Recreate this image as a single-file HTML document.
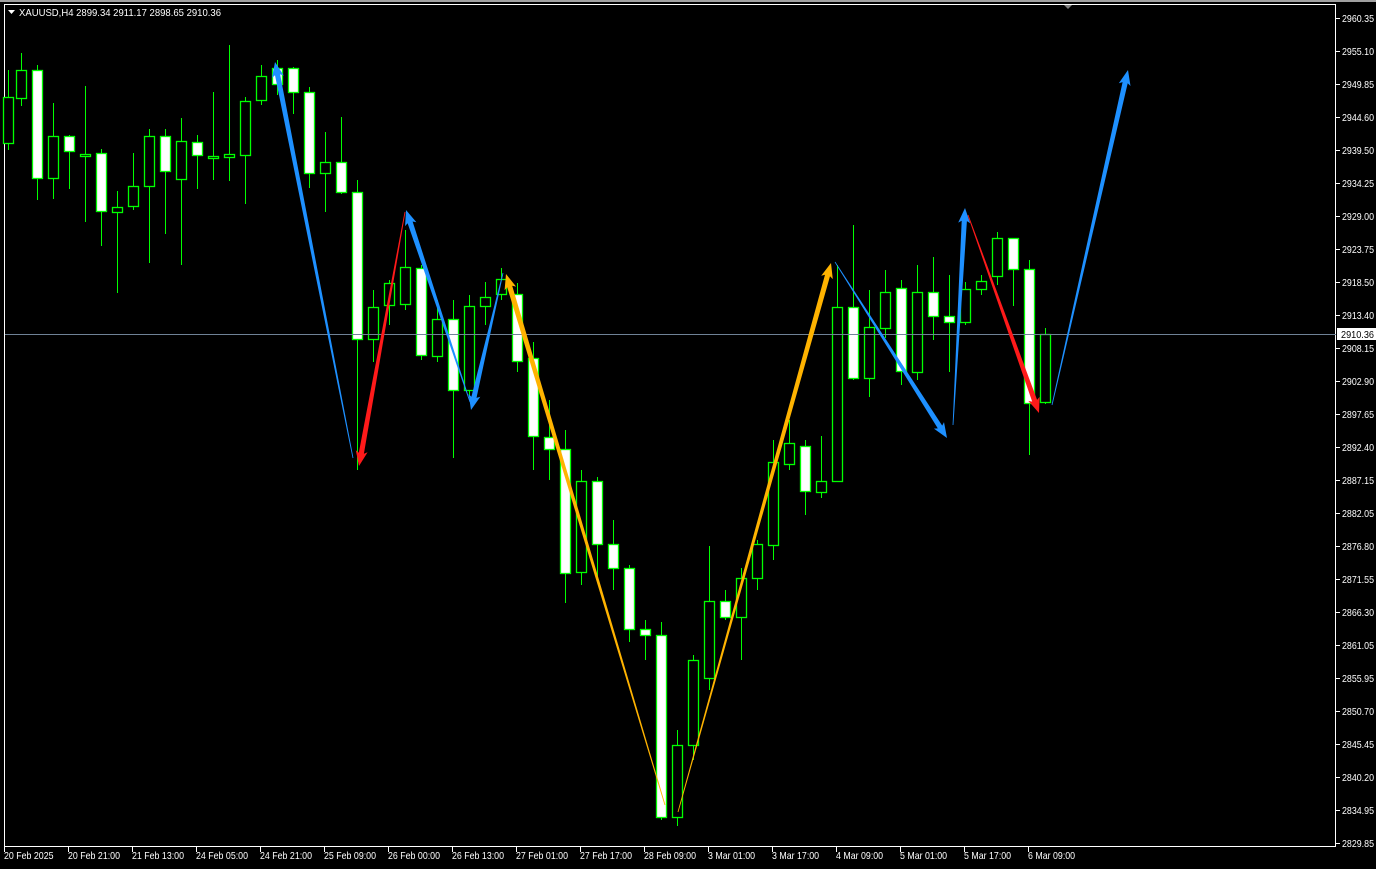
<!DOCTYPE html>
<html><head><meta charset="utf-8"><style>
html,body{margin:0;padding:0;background:#000;width:1376px;height:869px;overflow:hidden}
svg{display:block}
text{font-family:"Liberation Sans",sans-serif;font-size:10.5px;fill:#fff}
</style></head><body>
<svg id="s" width="1376" height="869" viewBox="0 0 1376 869" xmlns="http://www.w3.org/2000/svg">
<rect x="0" y="0" width="1376" height="869" fill="#000"/>
<rect x="0" y="0" width="1376" height="2" fill="#a0a0a0"/>
<rect x="4.5" y="4.5" width="1331" height="842" fill="none" stroke="#fff" stroke-width="1"/>
<polygon points="1064,5 1072,5 1068,9" fill="#808080"/>
<g id="cd"></g>
<line x1="5" y1="334.5" x2="1336" y2="334.5" stroke="#6f8296" stroke-width="1"/>
<g id="ar"></g>
<polygon points="8,10 15,10 11.5,14" fill="#fff"/>
<text x="19" y="16" textLength="202" lengthAdjust="spacingAndGlyphs">XAUUSD,H4  2899.34 2911.17 2898.65 2910.36</text>
<g id="ax"></g>
<rect x="1337" y="328" width="39" height="12" fill="#fff"/>
<text x="1341" y="338" style="fill:#000" textLength="33" lengthAdjust="spacingAndGlyphs">2910.36</text>
<g id="bx"></g>
</svg>
<script>
var ns="http://www.w3.org/2000/svg";
function el(t,a,p){var e=document.createElementNS(ns,t);for(var k in a)e.setAttribute(k,a[k]);p.appendChild(e);return e;}
var C=[[8,70,150,97,143,0],[21,53,106,70,98,0],[37,65,200,70,178,1],[53,103,199,136,178,0],[69,135,189,136,151,1],[85,86,222,154,154,0],[101,149,246,153,211,1],[117,191,293,207,212,0],[133,153,210,186,206,0],[149,129,263,136,186,0],[165,129,234,136,171,1],[181,118,265,141,179,0],[197,135,189,142,155,1],[213,92,180,156,156,0],[229,45,181,154,157,0],[245,97,204,101,155,0],[261,65,105,76,100,0],[277,60,95,68,84,1],[293,67,114,68,92,1],[309,87,188,92,173,1],[325,132,212,162,173,0],[341,117,194,162,192,1],[357,180,470,192,339,1],[373,290,362,307,339,0],[389,280,325,283,305,0],[405,230,310,267,304,0],[421,265,360,268,355,1],[437,300,362,319,356,0],[453,300,458,319,390,1],[469,295,396,306,390,0],[485,282,325,297,306,0],[501,268,300,279,294,0],[517,283,372,294,361,1],[533,342,470,358,436,1],[549,400,480,437,449,1],[565,430,603,449,573,1],[581,470,585,481,572,0],[597,477,582,481,544,1],[613,520,590,544,568,1],[629,565,642,568,629,1],[645,620,660,629,635,1],[661,622,820,635,817,1],[677,730,826,745,817,0],[693,655,760,660,745,0],[709,546,690,601,678,0],[725,590,620,601,617,1],[741,568,660,578,617,0],[757,540,590,544,578,0],[773,440,560,462,545,0],[789,420,470,443,464,0],[805,440,515,446,491,1],[821,436,498,481,492,0],[837,265,482,307,481,0],[853,225,380,307,378,1],[869,290,397,327,378,0],[885,270,338,292,328,0],[901,280,385,288,371,1],[917,265,380,292,372,0],[933,257,340,292,316,1],[949,275,372,316,322,1],[965,282,325,289,322,0],[981,275,295,281,289,0],[997,232,285,238,276,0],[1013,238,306,238,269,1],[1029,260,455,269,403,1],[1045,328,404,334,402,0]];
var cd=document.getElementById("cd");
C.forEach(function(c){
 el("line",{x1:c[0]+.5,y1:c[1],x2:c[0]+.5,y2:c[2],stroke:"#00ff00","stroke-width":1},cd);
 var h=Math.max(c[4]-c[3],2);
 el("rect",{x:c[0]-4.5,y:c[3]+.5,width:10,height:h,fill:c[5]?"#fff":"#000",stroke:"#00ff00","stroke-width":1.3},cd);
});
var A=[[353,458,275,62,"#1e90ff"],[405,212,359,466,"#ff1a1a"],[470,402,406,210,"#1e90ff"],[503,273,471,410,"#1e90ff"],[665,805,506,274,"#ffb300"],[678,812,831,263,"#ffb300"],[835,262,947,438,"#1e90ff"],[953,425,965,208,"#1e90ff"],[968,215,1039,413,"#ff1a1a"],[1052,405,1128,70,"#1e90ff"]];
var ar=document.getElementById("ar");
A.forEach(function(a){
 var x1=a[0],y1=a[1],x2=a[2],y2=a[3],dx=x2-x1,dy=y2-y1,L=Math.hypot(dx,dy),ux=dx/L,uy=dy/L,px=-uy,py=ux;
 var hl=13,bx=x2-ux*hl,by=y2-uy*hl,w0=0.4,w1=2.6,hw=6;
 var p=[[x1+px*w0,y1+py*w0],[bx+px*w1,by+py*w1],[bx+px*hw-ux*2,by+py*hw-uy*2],[x2,y2],[bx-px*hw-ux*2,by-py*hw-uy*2],[bx-px*w1,by-py*w1],[x1-px*w0,y1-py*w0]];
 el("polygon",{points:p.map(function(q){return q[0].toFixed(1)+","+q[1].toFixed(1)}).join(" "),fill:a[4]},ar);
});
var ax=document.getElementById("ax");
var P=["2960.35","2955.10","2949.85","2944.60","2939.50","2934.25","2929.00","2923.75","2918.50","2913.40","2908.15","2902.90","2897.65","2892.40","2887.15","2882.05","2876.80","2871.55","2866.30","2861.05","2855.95","2850.70","2845.45","2840.20","2834.95","2829.85"];
P.forEach(function(t,i){var y=18+i*33;
 el("line",{x1:1336,y1:y+.5,x2:1340,y2:y+.5,stroke:"#fff"},ax);
 var e=el("text",{x:1342,y:y+4,textLength:32,lengthAdjust:"spacingAndGlyphs"},ax);e.textContent=t;});
var bx=document.getElementById("bx");
var D=["20 Feb 2025","20 Feb 21:00","21 Feb 13:00","24 Feb 05:00","24 Feb 21:00","25 Feb 09:00","26 Feb 00:00","26 Feb 13:00","27 Feb 01:00","27 Feb 17:00","28 Feb 09:00","3 Mar 01:00","3 Mar 17:00","4 Mar 09:00","5 Mar 01:00","5 Mar 17:00","6 Mar 09:00"];
D.forEach(function(t,i){var x=4+i*64;
 el("line",{x1:x+.5,y1:847,x2:x+.5,y2:852,stroke:"#fff"},bx);
 var e=el("text",{x:x,y:859},bx);e.textContent=t;
 var w=e.getComputedTextLength();e.setAttribute("textLength",(w*0.84).toFixed(1));e.setAttribute("lengthAdjust","spacingAndGlyphs");});
</script>
</body></html>
